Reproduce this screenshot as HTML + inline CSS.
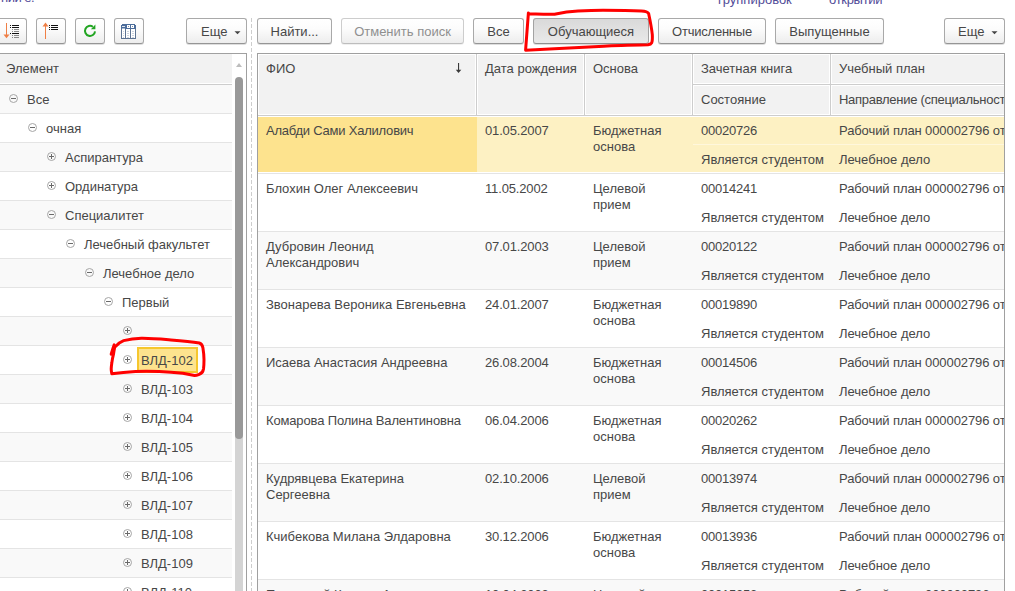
<!DOCTYPE html>
<html><head><meta charset="utf-8">
<style>
*{box-sizing:border-box;margin:0;padding:0}
html,body{width:1015px;height:591px;overflow:hidden;background:#fff}
body{position:relative;font-family:"Liberation Sans",sans-serif;font-size:13px;color:#474747}
.a{position:absolute}
.t{position:absolute;white-space:nowrap;line-height:16px}
.lnk{color:#524c98}
.btn{position:absolute;top:18px;height:26px;border:1px solid #a9a9a9;border-bottom-color:#959595;border-radius:3px;
 background:linear-gradient(#fff 0%,#fcfcfc 40%,#ededed 100%);box-shadow:0 1px 0 rgba(0,0,0,.13);
 text-align:center;line-height:24px;color:#474747;white-space:nowrap}
.btn.dis{color:#8f8f8f;border-color:#cdcdcd;border-bottom-color:#bdbdbd;box-shadow:0 1px 0 rgba(0,0,0,.06)}
.btn.pr{background:linear-gradient(#d9d9d9,#e3e3e3 60%,#e9e9e9);border-color:#a3a3a3;border-bottom-color:#8f8f8f}
.btn svg{position:absolute;left:0;top:0}
.bt{position:relative;top:1px}
.row{position:absolute;left:0;width:232px;height:29px;border-bottom:1px solid #e4e4e4}
.g{background:#f9f9f9}
.row .t{top:7px}
.ic{position:absolute;top:9px;width:9px;height:9px;border:1px solid #a6a6a6;border-radius:50%}
.ic:before{content:"";position:absolute;left:1px;top:3px;width:5px;height:1px;background:#6a6a6a}
.ic.p:after{content:"";position:absolute;left:3px;top:1px;width:1px;height:5px;background:#6a6a6a}
.rrow{position:absolute;left:0;width:747px;height:58px;border-bottom:1px solid #e4e4e4}
.hc{position:absolute;background:#f2f2f2;border:1px solid #fff}
</style></head><body>

<div class="t lnk" style="left:1px;top:-10px;letter-spacing:-0.5px">нии е.</div>
<div class="t lnk" style="left:718px;top:-8px">группировок</div>
<div class="t lnk" style="left:829px;top:-8px;letter-spacing:-0.3px">открытий</div>

<div class="btn" style="left:-3px;width:30px"><svg style="left:-1px" width="31" height="26" viewBox="0 0 31 26">
<g fill="#ef7f45"><rect x="9" y="4" width="1" height="14"/><path d="M6.5 15.6 L12.5 15.6 L9.5 19.2 Z"/></g>
<g fill="#111"><rect x="13" y="6" width="1" height="1"/><rect x="15" y="6" width="7" height="1"/>
<rect x="13" y="8" width="1" height="1"/><rect x="15" y="8" width="7" height="1"/>
<rect x="13" y="14" width="1" height="1"/><rect x="15" y="14" width="7" height="1"/></g>
<g fill="#8a8a8a"><rect x="15" y="10" width="1" height="1"/><rect x="17" y="10" width="5" height="1"/>
<rect x="15" y="12" width="1" height="1"/><rect x="17" y="12" width="5" height="1"/>
<rect x="15" y="16" width="1" height="1"/><rect x="17" y="16" width="5" height="1"/>
<rect x="15" y="18" width="1" height="1"/><rect x="17" y="18" width="5" height="1"/></g>
</svg></div>
<div class="btn" style="left:36px;width:30px"><svg width="30" height="26" viewBox="0 0 30 26">
<g fill="#ef7f45"><rect x="8" y="6" width="1" height="14"/><path d="M5.5 7.5 L11.5 7.5 L8.5 3.6 Z"/></g>
<g fill="#111"><rect x="12" y="6" width="1" height="1"/><rect x="14" y="6" width="7" height="1"/>
<rect x="12" y="8" width="1" height="1"/><rect x="14" y="8" width="7" height="1"/>
<rect x="12" y="10" width="1" height="1"/><rect x="14" y="10" width="7" height="1"/></g>
</svg></div>
<div class="btn" style="left:75px;width:30px"><svg width="30" height="26" viewBox="0 0 30 26">
<path d="M19 12.3 A5 5 0 1 1 16.9 7.8" fill="none" stroke="#22a522" stroke-width="2"/>
<path d="M14.9 10.2 L19.4 10.2 L19.4 5.6 Z" fill="#22a522"/>
</svg></div>
<div class="btn" style="left:114px;width:30px"><svg width="30" height="26" viewBox="0 0 30 26" shape-rendering="crispEdges">
<rect x="6" y="10" width="15" height="10" fill="#5d7392"/>
<rect x="7" y="10" width="3" height="9" fill="#fff"/>
<rect x="11" y="10" width="4" height="9" fill="#fff"/>
<rect x="16" y="10" width="4" height="9" fill="#fff"/>
<rect x="7" y="5" width="13" height="1" fill="#4c6d9b"/>
<rect x="6" y="6" width="15" height="4" fill="#4c6d9b"/>
<rect x="7" y="7" width="3" height="1" fill="#e3e9f1"/><rect x="7" y="9" width="3" height="1" fill="#a9bbd2"/>
<rect x="12" y="6" width="3" height="3" fill="#fff"/><rect x="16" y="6" width="3" height="3" fill="#fff"/>
<rect x="13" y="7" width="1" height="1" fill="#8090a8"/><rect x="17" y="7" width="1" height="1" fill="#8090a8"/>
<g fill="#cdd4de"><rect x="8" y="12" width="1" height="1"/><rect x="8" y="14" width="1" height="1"/><rect x="8" y="16" width="1" height="1"/><rect x="8" y="18" width="1" height="1"/>
<rect x="12" y="12" width="2" height="1"/><rect x="12" y="14" width="2" height="1"/><rect x="12" y="16" width="2" height="1"/><rect x="12" y="18" width="2" height="1"/>
<rect x="17" y="12" width="2" height="1"/><rect x="17" y="14" width="2" height="1"/><rect x="17" y="16" width="2" height="1"/><rect x="17" y="18" width="2" height="1"/></g>
</svg></div>
<div class="btn" style="left:186px;width:61px;text-align:left;padding-left:14px"><span class="bt">Еще</span><svg class="car" width="7" height="4" style="position:absolute;top:12px;left:47px" viewBox="0 0 7 4"><path d="M0.5 0.2 L6.5 0.2 L3.5 3.3 Z" fill="#444"/></svg></div>

<svg class="a" style="left:251px;top:18px" width="1" height="573"><line x1="0.5" y1="0" x2="0.5" y2="573" stroke="#cdcdcd" stroke-dasharray="4 2"/></svg>

<div class="btn" style="left:257px;width:75px"><span class="bt">Найти...</span></div>
<div class="btn dis" style="left:341px;width:123px"><span class="bt">Отменить поиск</span></div>
<div class="btn" style="left:473px;width:51px"><span class="bt">Все</span></div>
<div class="btn pr" style="left:533px;width:116px"><span class="bt">Обучающиеся</span></div>
<div class="btn" style="left:658px;width:108px"><span class="bt" style="letter-spacing:-0.22px">Отчисленные</span></div>
<div class="btn" style="left:775px;width:109px"><span class="bt">Выпущенные</span></div>
<div class="btn" style="left:944px;width:61px;text-align:left;padding-left:13px"><span class="bt">Еще</span><svg class="car" width="7" height="4" style="position:absolute;top:12px;left:46px" viewBox="0 0 7 4"><path d="M0.5 0.2 L6.5 0.2 L3.5 3.3 Z" fill="#444"/></svg></div>

<div class="a" style="left:0;top:53px;width:247px;height:538px;border-top:1px solid #a0a0a0;border-right:1px solid #a0a0a0;overflow:hidden">
<div class="a" style="left:0;top:0;width:232px;height:31px;background:#f2f2f2;border-bottom:1px solid #cdcdcd;box-shadow:inset 0 -1px 0 #fff"></div>
<div class="t" style="left:6px;top:7px">Элемент</div>
<div class="row g" style="top:31px"><div class="ic m" style="left:9px"></div><div class="t" style="left:27px">Все</div></div>
<div class="row" style="top:60px"><div class="ic m" style="left:28px"></div><div class="t" style="left:46px">очная</div></div>
<div class="row g" style="top:89px"><div class="ic p" style="left:47px"></div><div class="t" style="left:65px">Аспирантура</div></div>
<div class="row" style="top:118px"><div class="ic p" style="left:47px"></div><div class="t" style="left:65px">Ординатура</div></div>
<div class="row g" style="top:147px"><div class="ic m" style="left:47px"></div><div class="t" style="left:65px">Специалитет</div></div>
<div class="row" style="top:176px"><div class="ic m" style="left:66px"></div><div class="t" style="left:84px">Лечебный факультет</div></div>
<div class="row g" style="top:205px"><div class="ic m" style="left:85px"></div><div class="t" style="left:103px">Лечебное дело</div></div>
<div class="row" style="top:234px"><div class="ic m" style="left:104px"></div><div class="t" style="left:122px">Первый</div></div>
<div class="row g" style="top:263px"><div class="ic p" style="left:123px"></div></div>
<div class="row" style="top:292px"><div class="ic p" style="left:123px"></div><div class="a" style="left:137px;top:1px;width:61px;height:26px;background:#fde38e;border:2px solid #f6c72e"></div><div class="t" style="left:141px">ВЛД-102</div></div>
<div class="row g" style="top:321px"><div class="ic p" style="left:123px"></div><div class="t" style="left:141px">ВЛД-103</div></div>
<div class="row" style="top:350px"><div class="ic p" style="left:123px"></div><div class="t" style="left:141px">ВЛД-104</div></div>
<div class="row g" style="top:379px"><div class="ic p" style="left:123px"></div><div class="t" style="left:141px">ВЛД-105</div></div>
<div class="row" style="top:408px"><div class="ic p" style="left:123px"></div><div class="t" style="left:141px">ВЛД-106</div></div>
<div class="row g" style="top:437px"><div class="ic p" style="left:123px"></div><div class="t" style="left:141px">ВЛД-107</div></div>
<div class="row" style="top:466px"><div class="ic p" style="left:123px"></div><div class="t" style="left:141px">ВЛД-108</div></div>
<div class="row g" style="top:495px"><div class="ic p" style="left:123px"></div><div class="t" style="left:141px">ВЛД-109</div></div>
<div class="row" style="top:524px"><div class="ic p" style="left:123px"></div><div class="t" style="left:141px">ВЛД-110</div></div>
<div class="a" style="left:236px;top:9px;width:0;height:0;border-left:3px solid transparent;border-right:3px solid transparent;border-bottom:4px solid #bdbdbd"></div>
<div class="a" style="left:235px;top:375px;width:8px;height:200px;background:#d4d4d4"></div>
<div class="a" style="left:235px;top:23px;width:8px;height:362px;background:#999;border-radius:4px"></div>
</div>

<div class="a" style="left:257px;top:53px;width:748px;height:538px;border-top:1px solid #a0a0a0;border-left:1px solid #a0a0a0;border-right:1px solid #a0a0a0;overflow:hidden">
<div class="a" style="left:0;top:0;width:747px;height:62px;background:#cdcdcd"></div>
<div class="hc" style="left:0px;top:0px;width:218px;height:61px"></div>
<div class="hc" style="left:219px;top:0px;width:107px;height:61px"></div>
<div class="hc" style="left:327px;top:0px;width:107px;height:61px"></div>
<div class="hc" style="left:435px;top:0px;width:137px;height:30px"></div>
<div class="hc" style="left:435px;top:31px;width:137px;height:30px"></div>
<div class="hc" style="left:573px;top:0px;width:180px;height:30px"></div>
<div class="hc" style="left:573px;top:31px;width:180px;height:30px"></div>
<div class="t" style="left:8px;top:7px">ФИО</div>
<div class="t" style="left:227px;top:7px">Дата рождения</div>
<div class="t" style="left:335px;top:7px">Основа</div>
<div class="t" style="left:443px;top:7px">Зачетная книга</div>
<div class="t" style="left:581px;top:7px">Учебный план</div>
<div class="t" style="left:443px;top:38px">Состояние</div>
<div class="t" style="left:581px;top:38px;letter-spacing:-0.28px">Направление (специальность)</div>
<svg class="a" style="left:197px;top:8px" width="8" height="12" viewBox="0 0 8 12"><rect x="3" y="1" width="1.1" height="8" fill="#3a3a3a"/><path d="M0.8 7.8 L6.3 7.8 L3.55 11 Z" fill="#3a3a3a"/></svg>
<div class="rrow" style="top:62px;background:#fdf1c3"><div class="a" style="left:0;top:0;width:747px;height:57px;border:1px solid #fff;border-left:0;border-right:0"></div><div class="a" style="left:0;top:1px;width:219px;height:55px;background:#fde38e"></div><div class="a" style="left:435px;top:28px;width:312px;height:1px;background:#fff7dc"></div><div class="t" style="left:8px;top:7px;letter-spacing:-0.22px">Алабди Сами Халилович</div><div class="t" style="left:227px;top:7px;letter-spacing:-0.15px">01.05.2007</div><div class="t" style="left:335px;top:7px">Бюджетная</div><div class="t" style="left:335px;top:23px">основа</div><div class="t" style="left:443px;top:7px;letter-spacing:-0.22px">00020726</div><div class="t" style="left:581px;top:7px;letter-spacing:-0.1px">Рабочий план 000002796 от 01.09.2023</div><div class="t" style="left:443px;top:36px">Является студентом</div><div class="t" style="left:581px;top:36px">Лечебное дело</div></div>
<div class="rrow" style="top:120px;"><div class="t" style="left:8px;top:7px">Блохин Олег Алексеевич</div><div class="t" style="left:227px;top:7px;letter-spacing:-0.15px">11.05.2002</div><div class="t" style="left:335px;top:7px">Целевой</div><div class="t" style="left:335px;top:23px">прием</div><div class="t" style="left:443px;top:7px;letter-spacing:-0.22px">00014241</div><div class="t" style="left:581px;top:7px;letter-spacing:-0.1px">Рабочий план 000002796 от 01.09.2023</div><div class="t" style="left:443px;top:36px">Является студентом</div><div class="t" style="left:581px;top:36px">Лечебное дело</div></div>
<div class="rrow" style="top:178px;background:#f9f9f9"><div class="t" style="left:8px;top:7px">Дубровин Леонид</div><div class="t" style="left:8px;top:23px">Александрович</div><div class="t" style="left:227px;top:7px;letter-spacing:-0.15px">07.01.2003</div><div class="t" style="left:335px;top:7px">Целевой</div><div class="t" style="left:335px;top:23px">прием</div><div class="t" style="left:443px;top:7px;letter-spacing:-0.22px">00020122</div><div class="t" style="left:581px;top:7px;letter-spacing:-0.1px">Рабочий план 000002796 от 01.09.2023</div><div class="t" style="left:443px;top:36px">Является студентом</div><div class="t" style="left:581px;top:36px">Лечебное дело</div></div>
<div class="rrow" style="top:236px;"><div class="t" style="left:8px;top:7px">Звонарева Вероника Евгеньевна</div><div class="t" style="left:227px;top:7px;letter-spacing:-0.15px">24.01.2007</div><div class="t" style="left:335px;top:7px">Бюджетная</div><div class="t" style="left:335px;top:23px">основа</div><div class="t" style="left:443px;top:7px;letter-spacing:-0.22px">00019890</div><div class="t" style="left:581px;top:7px;letter-spacing:-0.1px">Рабочий план 000002796 от 01.09.2023</div><div class="t" style="left:443px;top:36px">Является студентом</div><div class="t" style="left:581px;top:36px">Лечебное дело</div></div>
<div class="rrow" style="top:294px;background:#f9f9f9"><div class="t" style="left:8px;top:7px">Исаева Анастасия Андреевна</div><div class="t" style="left:227px;top:7px;letter-spacing:-0.15px">26.08.2004</div><div class="t" style="left:335px;top:7px">Бюджетная</div><div class="t" style="left:335px;top:23px">основа</div><div class="t" style="left:443px;top:7px;letter-spacing:-0.22px">00014506</div><div class="t" style="left:581px;top:7px;letter-spacing:-0.1px">Рабочий план 000002796 от 01.09.2023</div><div class="t" style="left:443px;top:36px">Является студентом</div><div class="t" style="left:581px;top:36px">Лечебное дело</div></div>
<div class="rrow" style="top:352px;"><div class="t" style="left:8px;top:7px;letter-spacing:-0.15px">Комарова Полина Валентиновна</div><div class="t" style="left:227px;top:7px;letter-spacing:-0.15px">06.04.2006</div><div class="t" style="left:335px;top:7px">Бюджетная</div><div class="t" style="left:335px;top:23px">основа</div><div class="t" style="left:443px;top:7px;letter-spacing:-0.22px">00020262</div><div class="t" style="left:581px;top:7px;letter-spacing:-0.1px">Рабочий план 000002796 от 01.09.2023</div><div class="t" style="left:443px;top:36px">Является студентом</div><div class="t" style="left:581px;top:36px">Лечебное дело</div></div>
<div class="rrow" style="top:410px;background:#f9f9f9"><div class="t" style="left:8px;top:7px">Кудрявцева Екатерина</div><div class="t" style="left:8px;top:23px">Сергеевна</div><div class="t" style="left:227px;top:7px;letter-spacing:-0.15px">02.10.2006</div><div class="t" style="left:335px;top:7px">Целевой</div><div class="t" style="left:335px;top:23px">прием</div><div class="t" style="left:443px;top:7px;letter-spacing:-0.22px">00013974</div><div class="t" style="left:581px;top:7px;letter-spacing:-0.1px">Рабочий план 000002796 от 01.09.2023</div><div class="t" style="left:443px;top:36px">Является студентом</div><div class="t" style="left:581px;top:36px">Лечебное дело</div></div>
<div class="rrow" style="top:468px;"><div class="t" style="left:8px;top:7px">Кчибекова Милана Элдаровна</div><div class="t" style="left:227px;top:7px;letter-spacing:-0.15px">30.12.2006</div><div class="t" style="left:335px;top:7px">Бюджетная</div><div class="t" style="left:335px;top:23px">основа</div><div class="t" style="left:443px;top:7px;letter-spacing:-0.22px">00013936</div><div class="t" style="left:581px;top:7px;letter-spacing:-0.1px">Рабочий план 000002796 от 01.09.2023</div><div class="t" style="left:443px;top:36px">Является студентом</div><div class="t" style="left:581px;top:36px">Лечебное дело</div></div>
<div class="rrow" style="top:526px;background:#f9f9f9"><div class="t" style="left:8px;top:7px">Пятницкий Кирилл Андреевич</div><div class="t" style="left:227px;top:7px;letter-spacing:-0.15px">10.04.2003</div><div class="t" style="left:335px;top:7px">Целевой</div><div class="t" style="left:335px;top:23px">прием</div><div class="t" style="left:443px;top:7px;letter-spacing:-0.22px">00015252</div><div class="t" style="left:581px;top:7px;letter-spacing:-0.1px">Рабочий план 000002796 от 01.09.2023</div><div class="t" style="left:443px;top:36px">Является студентом</div><div class="t" style="left:581px;top:36px">Лечебное дело</div></div>
</div>

<svg class="a" style="left:0;top:0" width="1015" height="591" viewBox="0 0 1015 591">
<g fill="none" stroke="#f00" stroke-width="3" stroke-linecap="round" stroke-linejoin="round">
<path d="M528.4 13.9 C536 14 546 14.4 554.5 14.2 C562 12.6 570 11.4 578 11 C586 10.6 595 10.3 603 10.3 C618 10.4 632 10.6 641.4 10.9 C645 11 647.6 11.6 648.6 13.4 C650 20 651.5 27 652.3 34.6 C652.5 38 652.4 41 651.7 42.7 C651 44 649.5 44.6 648 44.8 C630 45.2 615 45.6 603.7 46.2 C585 47 570 47.8 559.3 48.4 C545 49.2 535 49.8 525.6 50.2 L528.4 12.9"/>
<path d="M115.4 346.6 C118 343.5 120.5 341.8 123.6 340.6 C130 339 136 338.4 141.4 338.3 C152 338.2 162 339.2 170.9 340 C182 341 192 342 199.3 343 C201.5 343.6 202.5 345.5 202.9 347.7 C203.6 352 204 356 204 359.6 C204 363 203.9 366 203.5 369 C203 372 201.5 373.6 199.3 374.3 C197.5 375 196 375.5 194.6 375.5 C190 374.6 186 373.8 182.8 373.2 C175 372.3 167 371.7 159.1 371.4 C150 371.2 142 371.2 135.5 371.4 C126 371.9 118 372.8 111.8 373.7 C111.3 371.5 111.2 370 111.2 369 C111.3 366.5 111.5 365 111.8 363.1 C112.3 359 113 356 113.6 353.6 C114 350.5 114.5 348.5 114.8 346.6"/>
<path d="M114.2 344.8 C113 348 112 351.5 111.2 354.2"/>
</g></svg>
</body></html>
